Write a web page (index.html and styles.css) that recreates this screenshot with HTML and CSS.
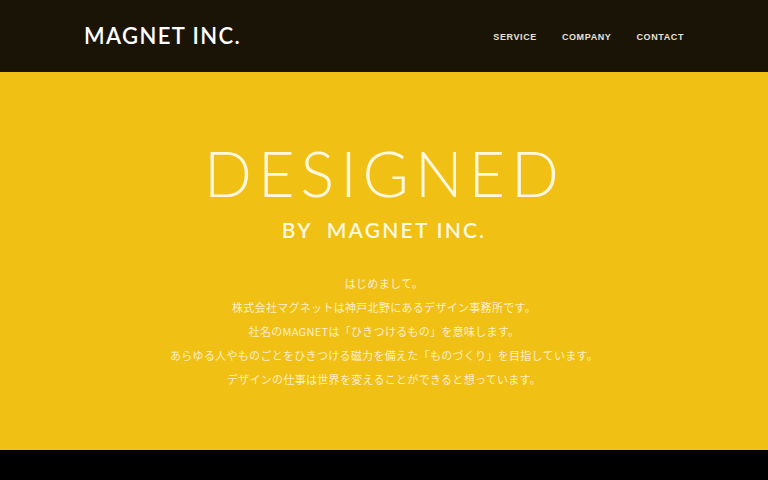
FILE: index.html
```html
<!DOCTYPE html>
<html lang="ja">
<head>
<meta charset="utf-8">
<title>MAGNET INC.</title>
<link rel="stylesheet" href="styles.css">
</head>
<body>
<header class="site-header">
  <div class="header-inner">
    <a class="logo" href="#">MAGNET INC.</a>
    <nav class="global-nav">
      <a href="#">SERVICE</a>
      <a href="#">COMPANY</a>
      <a href="#">CONTACT</a>
    </nav>
  </div>
</header>
<main>
  <section class="hero">
    <h1 class="hero-title">DESIGNED</h1>
    <p class="hero-sub">BY&nbsp; MAGNET INC.</p>
    <div class="hero-message">
      <p>はじめまして。</p>
      <p>株式会社マグネットは神戸北野にあるデザイン事務所です。</p>
      <p>社名のMAGNETは「ひきつけるもの」を意味します。</p>
      <p>あらゆる人やものごとをひきつける磁力を備えた「ものづくり」を目指しています。</p>
      <p>デザインの仕事は世界を変えることができると想っています。</p>
    </div>
  </section>
  <section class="dark-band"></section>
</main>
</body>
</html>
```
FILE: styles.css
```css
* { box-sizing: border-box; margin: 0; padding: 0; }

body {
  background: #000;
  font-family: "Lato", "Noto Sans CJK JP", sans-serif;
}

a { text-decoration: none; color: inherit; }

.site-header {
  background: #1a1407;
  height: 72px;
}

.header-inner {
  width: 600px;
  height: 100%;
  margin: 0 auto;
  display: flex;
  align-items: center;
  justify-content: space-between;
}

.logo {
  color: #fff;
  font-size: 22px;
  font-weight: 600;
  letter-spacing: 1.4px;
  margin-top: -1px;
}

.global-nav {
  display: flex;
  gap: 25px;
  margin-top: 2px;
}

.global-nav a {
  color: #e6e2da;
  font-family: "Liberation Sans", sans-serif;
  font-size: 9px;
  font-weight: 700;
  letter-spacing: 0.6px;
}

.hero {
  background: #f0c015;
  height: 378px;
  display: flex;
  flex-direction: column;
  align-items: center;
  padding-top: 69px;
  color: #fdf6dc;
}

.hero-title {
  font-size: 63px;
  font-weight: 300;
  letter-spacing: 6px;
  line-height: 1;
  color: #fff8e0;
  margin-left: 1px;
}

.hero-sub {
  font-size: 21px;
  font-weight: 600;
  letter-spacing: 2.2px;
  line-height: 1;
  margin-top: 15px;
  color: #fff8e0;
}

.hero-message {
  margin-top: 31px;
  text-align: center;
  font-family: "Noto Sans CJK JP", sans-serif;
  font-size: 11px;
  line-height: 24px;
  color: #fcefc8;
  letter-spacing: 0.3px;
}

.dark-band {
  height: 30px;
  background: #000;
}
```
